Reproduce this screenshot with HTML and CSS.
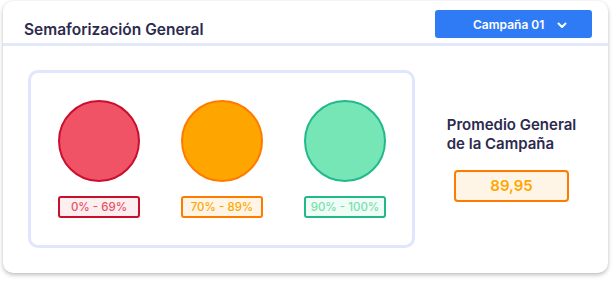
FILE: index.html
```html
<!DOCTYPE html>
<html lang="es">
<head>
    <meta charset="UTF-8">
    <meta name="viewport" content="width=device-width, initial-scale=1.0">
    <title>Semaforización General</title>
    <link rel="stylesheet" href="styles.css">
</head>
<body>
    <div class="card">
        <div class="card-header">
            <h2>Semaforización General</h2>
            <button class="select-btn">
                <span>Campaña 01</span>
                <svg width="10" height="7" viewBox="0 0 10 7"><path d="M1.5 1.5 L5 5 L8.5 1.5" fill="none" stroke="#fff" stroke-width="2" stroke-linecap="round" stroke-linejoin="round"/></svg>
            </button>
        </div>

        <div class="card-body">
            <div class="lights">
                <div class="light">
                    <div class="circle red"></div>
                    <div class="range red">0% - 69%</div>
                </div>
                <div class="light">
                    <div class="circle orange"></div>
                    <div class="range orange">70% - 89%</div>
                </div>
                <div class="light">
                    <div class="circle green"></div>
                    <div class="range green">90% - 100%</div>
                </div>
            </div>

            <div class="average">
                <h3>Promedio General<br>de la Campaña</h3>
                <div class="average-value">89,95</div>
            </div>
        </div>
    </div>
</body>
</html>
```

FILE: styles.css
```css
body {
    margin: 0;
    padding: 1px 5px 8px 3px;
    background: #fff;
    font-family: Inter, "Noto Sans", sans-serif;
}
.card {
    width: 605px;
    height: 272px;
    box-sizing: border-box;
    background: white;
    border-radius: 10px;
    box-shadow: 0 2px 4px rgba(0,0,0,0.25), 0 0 2px rgba(0,0,0,0.06);
    overflow: hidden;
}
.card-header {
    height: 42px;
    display: flex;
    align-items: flex-start;
    justify-content: space-between;
    padding: 0 16px 0 21px;
    border-bottom: 3px solid #e1e9fb;
}
.card-header h2 {
    margin: 19px 0 0;
    font-size: 15.5px;
    font-weight: 600;
    color: #2c2a4e;
    line-height: 20px;
}
.select-btn {
    margin-top: 9px;
    width: 157px;
    height: 28px;
    background: #2f7bf5;
    border: none;
    border-radius: 3px;
    color: white;
    font-family: inherit;
    font-size: 12px;
    font-weight: 600;
    display: flex;
    align-items: center;
    padding: 0 25px 0 38px;
    justify-content: space-between;
}
.select-btn svg { margin-top: 3px; }
.card-body {
    display: flex;
    align-items: center;
    padding: 24px 0 0 25px;
}
.lights {
    width: 387px;
    height: 178px;
    box-sizing: border-box;
    border: 3px solid #dfe6fd;
    border-radius: 10px;
    display: flex;
    gap: 41px;
    padding: 27px 0 0 27px;
}
.light {
    width: 82px;
    display: flex;
    flex-direction: column;
    align-items: center;
    gap: 14px;
}
.circle {
    width: 82px;
    height: 82px;
    box-sizing: border-box;
    border-radius: 50%;
    border: 2px solid;
}
.circle.red { background: #f05365; border-color: #c8102e; }
.circle.orange { background: #ffa500; border-color: #ff7b00; }
.circle.green { background: #76e6b7; border-color: #22b98a; }
.range {
    width: 82px;
    height: 22px;
    box-sizing: border-box;
    border: 2px solid;
    border-radius: 3px;
    font-size: 11.5px;
    font-weight: 500;
    text-align: center;
    line-height: 18px;
}
.range.red { background: #fdeef0; border-color: #c8102e; color: #e8505f; }
.range.orange { background: #fff5e6; border-color: #ff7b00; color: #ffa500; }
.range.green { background: #f0fcf6; border-color: #22b98a; color: #76e0b0; }
.average {
    flex: 1;
    display: flex;
    flex-direction: column;
    align-items: center;
    margin-top: -2px;
}
.average h3 {
    margin: 0 0 17px;
    font-size: 15px;
    font-weight: 600;
    line-height: 19px;
    color: #2c2a4e;
}
.average-value {
    width: 115px;
    height: 32px;
    box-sizing: border-box;
    background: #fff5e6;
    border: 2px solid #ff7b00;
    border-radius: 4px;
    color: #ffa500;
    font-size: 15px;
    font-weight: 600;
    text-align: center;
    line-height: 28px;
}
```
